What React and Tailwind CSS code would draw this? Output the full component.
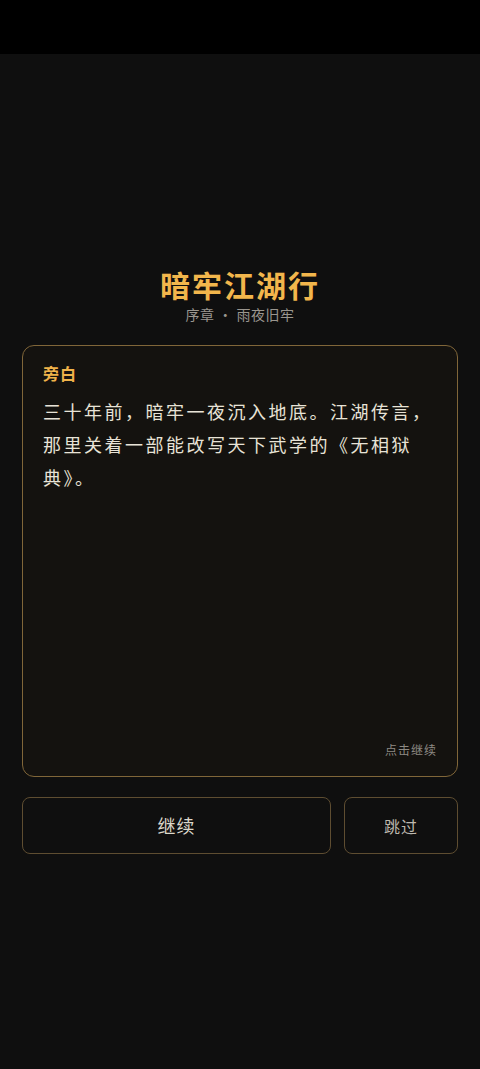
const font = { fontFamily: '"Noto Sans CJK SC", "Noto Sans", sans-serif' };

export default function App() {
  return (
    <div className="min-h-[1069px] bg-[#0f0f0f] text-[#e6e1d6]" style={font}>
      {/* status bar */}
      <div className="h-[54px] bg-black" />

      <div className="px-[22px] pt-[210px]">
        {/* Title */}
        <div className="text-center">
          <h1 className="text-[30px] leading-[40px] font-semibold tracking-[2px] text-[#f2b64c]">
            暗牢江湖行
          </h1>
          <p className="text-[14px] leading-[20px] tracking-[0.5px] text-[#9a968f]">
            序章 · 雨夜旧牢
          </p>
        </div>

        {/* Dialogue card */}
        <div className="mt-[21px] h-[432px] rounded-[12px] border border-[#806639] bg-[#14120f] px-[20px] pt-[15px] pb-[17px] flex flex-col">
          <div className="text-[16px] leading-[24px] font-semibold tracking-[1px] text-[#f0b34a]">旁白</div>
          <p className="mt-[10px] text-[18px] leading-[33px] tracking-[2.5px] text-[#e8e3d7]">
            三十年前，暗牢一夜沉入地底。江湖传言，那里关着一部能改写天下武学的《无相狱典》。
          </p>
          <div className="mt-auto text-right text-[12px] leading-[18px] tracking-[1px] text-[#8d8983]">
            点击继续
          </div>
        </div>

        {/* Actions */}
        <div className="mt-[20px] flex gap-[13px]">
          <button className="flex-1 h-[57px] rounded-[8px] border border-[#5e4d31] bg-[#0f0f0f] text-[18px] tracking-[1px] text-[#dcd7cb]">
            继续
          </button>
          <button className="w-[114px] h-[57px] rounded-[8px] border border-[#5e4d31] bg-[#0f0f0f] text-[16px] tracking-[1px] text-[#bdb8ae]">
            跳过
          </button>
        </div>
      </div>
    </div>
  );
}
